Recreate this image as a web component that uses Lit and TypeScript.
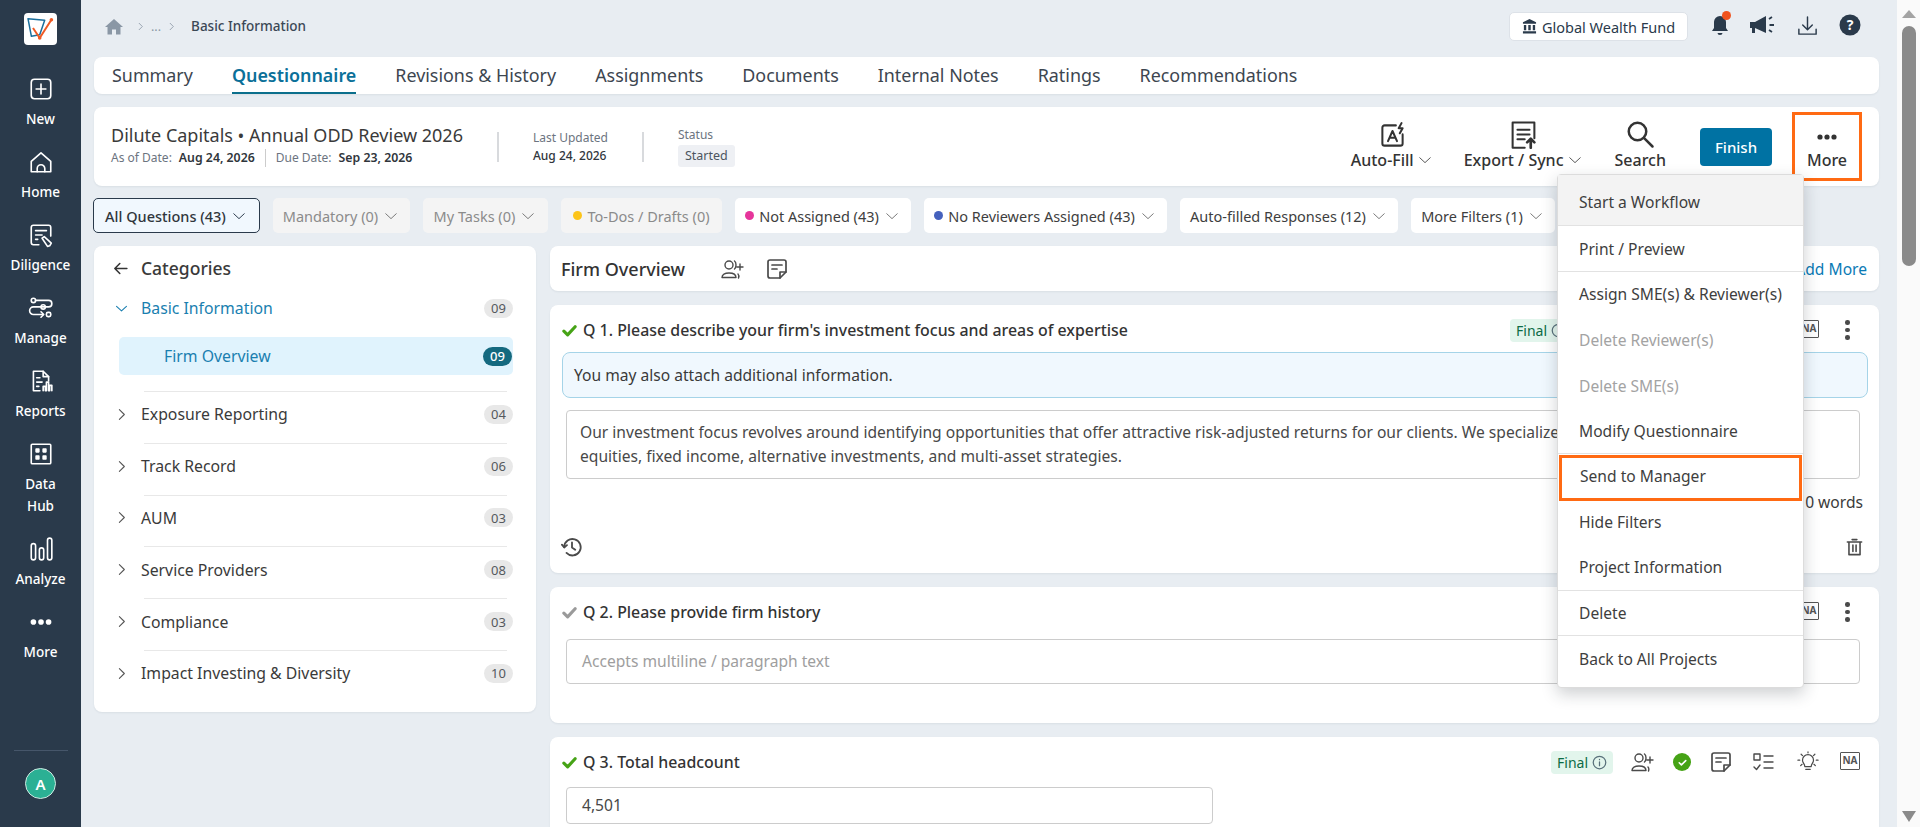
import { LitElement, css, html, svg } from 'lit';
import { customElement } from 'lit/decorators.js';

const icon = (body: unknown, size = 24, box = 24, color = 'currentColor', sw = 1.7) => html`
  <svg width=${size} height=${size} viewBox="0 0 ${box} ${box}" fill="none" stroke=${color} stroke-width=${sw}
    stroke-linecap="round" stroke-linejoin="round">${body}</svg>`;

const chevDown = svg`<path d="M5 9l7 6.500L19 9"/>`;
const chevRight = svg`<path d="M9 5l7 7-7 7"/>`;

const navIcons: Record<string, unknown> = {
  New: svg`<rect x="3" y="3" width="18" height="18" rx="3"/><path d="M12 7.500v9M7.500 12h9"/>`,
  Home: svg`<path d="M3 21V11.500L12 3.500l9 8V21z"/><path d="M8.500 21v-3a3.500 3.500 0 0 1 7 0v3"/>`,
  Diligence: svg`<path d="M10 21H5a2 2 0 0 1-2-2V5a2 2 0 0 1 2-2h14a2 2 0 0 1 2 2v8"/><path d="M7 8h10M7 12h6M7 16h2"/><path d="M13 15l2-1.500 6.500 6-1.500 2.500-2 .5z"/>`,
  Manage: svg`<rect x="3" y="3" width="4" height="4" rx="2"/><path d="M7 5h12a2 2 0 0 1 0 6H5a2 2 0 0 0 0 7h9"/><rect x="12" y="9" width="4" height="4" rx="2"/><rect x="17" y="16" width="4" height="4" rx="1.500"/><path d="M12 15.500l2.500 2.500-2.500 2.500"/>`,
  Reports: svg`<path d="M11 21H5V3h9l5 5v4"/><path d="M14 3v5h5M8 9h3M8 13h5M8 17h2"/><path d="M14 21v-4h2v4M17 21v-8h2v8M20 21v-5h2v5"/>`,
  'Data Hub': svg`<rect x="3" y="3" width="18" height="18" rx="1"/><rect x="7.500" y="7.500" width="2.500" height="2.500" fill="currentColor"/><rect x="14" y="7.500" width="2.500" height="2.500" fill="currentColor"/><rect x="7.500" y="14" width="2.500" height="2.500" fill="currentColor"/><rect x="14" y="14" width="2.500" height="2.500" fill="currentColor"/>`,
  Analyze: svg`<rect x="3" y="7" width="4" height="15" rx="2"/><rect x="10.500" y="11" width="4" height="11" rx="2"/><rect x="18" y="2" width="4" height="20" rx="2"/>`,
  More: svg`<g fill="currentColor" stroke="none"><circle cx="5" cy="12" r="2.600"/><circle cx="12" cy="12" r="2.600"/><circle cx="19" cy="12" r="2.600"/></g>`,
};

const nav = ['New', 'Home', 'Diligence', 'Manage', 'Reports', 'Data Hub', 'Analyze', 'More'];
const tabs = ['Summary', 'Questionnaire', 'Revisions & History', 'Assignments', 'Documents', 'Internal Notes', 'Ratings', 'Recommendations'];

const filters = [
  { label: 'All Questions (43)', kind: 'active', w: 167 },
  { label: 'Mandatory (0)', kind: 'off', w: 137 },
  { label: 'My Tasks (0)', kind: 'off', w: 125 },
  { label: 'To-Dos / Drafts (0)', kind: 'off', dot: '#fcc419', w: 161, noChev: true },
  { label: 'Not Assigned (43)', kind: '', dot: '#e6359b', w: 176 },
  { label: 'No Reviewers Assigned (43)', kind: '', dot: '#4561bd', w: 243 },
  { label: 'Auto-filled Responses (12)', kind: '', w: 218 },
  { label: 'More Filters (1)', kind: '', w: 144 },
];

const categories = [
  ['Exposure Reporting', '04'],
  ['Track Record', '06'],
  ['AUM', '03'],
  ['Service Providers', '08'],
  ['Compliance', '03'],
  ['Impact Investing & Diversity', '10'],
];

const menu = [
  { t: 'Start a Workflow', c: 'hover line' },
  { t: 'Print / Preview', c: 'line first' },
  { t: 'Assign SME(s) & Reviewer(s)', c: '' },
  { t: 'Delete Reviewer(s)', c: 'dim' },
  { t: 'Delete SME(s)', c: 'dim' },
  { t: 'Modify Questionnaire', c: 'line' },
  { t: 'Send to Manager', c: 'mark' },
  { t: 'Hide Filters', c: '' },
  { t: 'Project Information', c: 'line' },
  { t: 'Delete', c: 'line' },
  { t: 'Back to All Projects', c: '' },
];

const assignIcon = svg`<circle cx="9" cy="8" r="4"/><path d="M2 20.500c0-3 3-4.500 7-4.500s7 1.500 7 4.500z"/><path d="M14.500 4c2 1.500 2 6.500 0 8M20 7v6M17 10h6M18 17c1 1 1 2.500.5 4"/>`;
const noteIcon = svg`<path d="M5 3h14a2 2 0 0 1 2 2v10l-6 6H5a2 2 0 0 1-2-2V5a2 2 0 0 1 2-2z"/><path d="M7 8h10M7 12h5M15 21v-6h6"/>`;
const listIcon = svg`<rect x="3" y="4" width="6" height="6"/><path d="M3 17l2.500 2.500L9 15M13 6h9M13 12h9M13 18h9"/>`;
const bulbIcon = svg`<path d="M8.500 17c0-3-2.500-4-2.500-7a6 6 0 0 1 12 0c0 3-2.500 4-2.500 7z"/><path d="M9.500 20h5M12 1v1M3 10H1M23 10h-2M4.500 3.500l1.500 1.500M19.500 3.500L18 5M4 16l1.500-1.500M20 16l-1.500-1.500"/>`;

@customElement('app-root')
export class AppRoot extends LitElement {
  static styles = css`
    :host {
      display: flex;
      width: 1920px;
      height: 827px;
      overflow: hidden;
      position: relative;
      background: #e8edf2;
      font-family: 'Noto Sans', 'Open Sans', sans-serif;
      color: #3a3a3a;
      font-size: 15.6px;
    }
    svg { display: block; flex: none; }

    .side {
      width: 81px;
      flex: none;
      background: #2a3a4b;
      color: #fff;
      display: flex;
      flex-direction: column;
      align-items: center;
      padding-top: 13px;
      box-sizing: border-box;
    }
    .logo {
      width: 33px;
      height: 32px;
      border-radius: 4px;
      background: #fff;
      margin-bottom: 31px;
    }
    .nav-item {
      width: 81px;
      display: flex;
      flex-direction: column;
      align-items: center;
      text-align: center;
      font-size: 13.5px;
      font-weight: 500;
      line-height: 22px;
      height: 73px;
    }
    .nav-item.two { height: 95px; }
    .nav-item span { margin-top: 6px; width: 60px; }
    .side-foot {
      margin-top: auto;
      width: 54px;
      border-top: 1px solid #46566a;
      padding: 17px 0 28px;
      display: flex;
      justify-content: center;
    }
    .avatar {
      width: 29px;
      height: 29px;
      border-radius: 50%;
      background: #2bb094;
      border: 1px solid #cfe9e2;
      display: flex;
      align-items: center;
      justify-content: center;
      font-weight: 600;
      font-size: 15px;
    }

    .main {
      flex: 1;
      min-width: 0;
      padding: 12px 18px 0 13px;
      display: flex;
      flex-direction: column;
      box-sizing: border-box;
    }
    .scroll {
      width: 23px;
      flex: none;
      background: #fafafa;
      display: flex;
      flex-direction: column;
      align-items: center;
      padding: 10px 0 5px;
      box-sizing: border-box;
    }
    .thumb { width: 14px; height: 240px; margin-top: 8px; border-radius: 7px; background: #8a8a8a; }
    .arrow-up, .arrow-down { width: 0; height: 0; border-left: 7px solid transparent; border-right: 7px solid transparent; }
    .arrow-up { border-bottom: 8px solid #a3a3a3; }
    .arrow-down { border-top: 11px solid #8a8a8a; margin-top: auto; }

    .top {
      height: 29px;
      display: flex;
      align-items: center;
      padding-left: 11px;
      margin-bottom: 16px;
      flex: none;
    }
    .crumbs { display: flex; align-items: center; color: #8a97a5; font-size: 12.500px; }
    .crumbs b { color: #3b4856; font-weight: 500; font-size: 13.500px; margin-left: 14px; padding-bottom: 2px; }
    .crumbs .dots { margin: 0 5px; }
    .fund {
      margin-left: auto;
      height: 29px;
      width: 179px;
      box-sizing: border-box;
      background: #fff;
      border: 1px solid #dde2e8;
      border-radius: 5px;
      display: flex;
      align-items: center;
      justify-content: center;
      gap: 5px;
      color: #2a3a4b;
      font-size: 14.500px;
    }
    .top-icons { display: flex; align-items: center; color: #2a3a4b; margin: -3px 18px 0 20px; gap: 20px; }
    .bell { position: relative; margin-right: -4px; }
    .bell i {
      position: absolute;
      top: -2px;
      right: 1px;
      width: 9px;
      height: 9px;
      border-radius: 50%;
      background: #f0531f;
    }

    .card { background: #fff; border-radius: 8px; box-shadow: 0 1px 2px rgba(40, 60, 80, .08); }
    .tabs {
      height: 37px;
      flex: none;
      display: flex;
      padding-left: 18px;
      gap: 39px;
      font-size: 17.900px;
      box-sizing: border-box;
      margin-bottom: 13px;
    }
    .tab { line-height: 37px; color: #3d4650; height: 37px; box-sizing: border-box; }
    .tab.on { color: #0b7099; font-weight: 600; border-bottom: 2px solid #0b6f8c; }

    .head {
      height: 79px;
      flex: none;
      display: flex;
      align-items: center;
      margin-bottom: 12px;
      padding-left: 17px;
      box-sizing: border-box;
    }
    .head-l { margin-bottom: 4px; }
    .title { font-size: 18px; line-height: 26px; color: #3a3a3a; }
    .sub { font-size: 12px; color: #6c7480; display: flex; align-items: center; line-height: 16px; margin-top: 1px; }
    .sub b { font-weight: 600; font-size: 12.300px; color: #30363c; margin-left: 7px; }
    .sub i { width: 1px; height: 18px; background: #ccc; margin: 0 10px; }
    .vsep { width: 2px; height: 30px; background: #d8dadd; margin: 0 34px; }
    .meta { font-size: 12px; color: #6c7480; line-height: 18px; }
    .meta b { display: block; font-weight: 500; color: #30363c; }
    .pill { background: #eef0f4; color: #4c5560; border-radius: 3px; font-size: 12.500px; line-height: 22px; padding: 0 7px; margin-top: 1px; display: block; }
    .tools { margin-left: auto; display: flex; align-items: flex-end; height: 68px; }
    .tool {
      display: flex;
      flex-direction: column;
      align-items: center;
      font-size: 16px;
      font-weight: 500;
      color: #333;
      height: 68px;
      justify-content: flex-end;
      padding-bottom: 9.500px;
      box-sizing: border-box;
    }
    .tool .lab { display: flex; align-items: center; gap: 2px; line-height: 22px; }
    .finish {
      width: 72px;
      height: 38px;
      background: #0072a3;
      border-radius: 4px;
      color: #fff;
      font-size: 15px;
      font-weight: 500;
      display: flex;
      align-items: center;
      justify-content: center;
      margin: 0 20px 15px 34px;
    }
    .more-btn {
      width: 70px;
      height: 69px;
      box-sizing: border-box;
      border: 3px solid #ff6a13;
      margin-right: 17px;
      padding-bottom: 7px;
    }

    .filters { display: flex; gap: 13px; flex: none; height: 35px; margin-bottom: 13px; margin-left: -1px; }
    .chip {
      background: #fff;
      border-radius: 5px;
      display: flex;
      align-items: center;
      justify-content: center;
      gap: 4px;
      font-size: 14.500px;
      color: #3e3e3e;
      box-sizing: border-box;
    }
    .chip.off { background: #f4f4f4; color: #8b8b8b; }
    .chip.active { background: #f1f8fe; border: 1px solid #2a3a4b; color: #30363c; font-weight: 500; }
    .chip .dot { width: 9px; height: 9px; border-radius: 50%; margin-right: 1px; }

    .body { flex: 1; min-height: 0; display: flex; gap: 14px; align-items: flex-start; }
    .cats { width: 442px; height: 466px; flex: none; padding: 10px 19px 0 18px; box-sizing: border-box; }
    .cats-h { display: flex; align-items: center; gap: 12px; height: 24px; font-size: 17.500px; font-weight: 500; margin-bottom: 16px; }
    .cat { display: flex; align-items: center; font-size: 15.800px; }
    .cat .arrow { width: 24px; margin-right: 8px; display: flex; justify-content: center; margin-left: -3px; }
    .cat .name { flex: 1; }
    .count {
      width: 29px;
      height: 19px;
      border-radius: 10px;
      background: #e8e8e8;
      font-size: 13px;
      color: #55595d;
      display: flex;
      align-items: center;
      justify-content: center;
    }
    .cat.open { color: #1a7fb0; height: 24px; margin: 0 4px 17px 0; }
    .sel {
      height: 38px;
      margin: 0 4px 16px 7px;
      background: #e0f3fd;
      border-radius: 5px;
      color: #1a7fb0;
      display: flex;
      align-items: center;
      justify-content: space-between;
      font-size: 15.800px;
      padding: 0 1px 0 45px;
    }
    .sel .count { background: #14697f; color: #fff; font-weight: 500; }
    .cat.row { height: 51.800px; box-sizing: border-box; padding-bottom: 5px; margin: 0 4px 0 0; position: relative; }
    .cat.row::before {
      content: '';
      position: absolute;
      top: 0;
      left: 32px;
      right: 6px;
      border-top: 1px solid #e8e8e8;
    }

    .qs { flex: 1; min-width: 0; display: flex; flex-direction: column; gap: 14px; }
    .qs-h { height: 45px; display: flex; align-items: center; padding: 0 12px 0 11px; font-size: 18px; font-weight: 500; color: #333; }
    .qs-h .ic { margin-left: 35px; color: #4a4a4a; }
    .qs-h .ic + .ic { margin-left: 21px; }
    .qs-h .add { margin-left: auto; font-size: 15.600px; font-weight: 400; color: #0a7ab5; }

    .q { padding: 0 11px 0 12px; flex: none; box-sizing: border-box; position: relative; }
    .q-h { display: flex; align-items: center; height: 47px; padding-top: 3px; box-sizing: border-box; font-weight: 500; font-size: 15.900px; color: #333; gap: 6px; }
    .q-tools { margin-left: auto; margin-right: 8px; display: flex; align-items: center; color: #4a4a4a; font-weight: 400; }
    .q-tools.menu-row { margin-right: 18px; }
    .q-tools .t1 { margin-left: 17px; }
    .q-tools .t2 { margin-left: 19px; }
    .q-tools .t3 { margin-left: 18px; }
    .q-tools .t4 { margin-left: 22px; }
    .q-tools .t5 { margin-left: 21px; }
    .final {
      background: #e2f5ec;
      border-radius: 4px;
      height: 23px;
      width: 62px;
      display: flex;
      align-items: center;
      justify-content: center;
      gap: 4px;
      font-size: 14px;
      color: #0c6b45;
    }
    .ok { width: 18px; height: 18px; border-radius: 50%; background: #46a316; display: flex; align-items: center; justify-content: center; }
    .na {
      width: 20px;
      height: 18px;
      box-sizing: border-box;
      border: 1.500px solid #555;
      border-radius: 1px;
      font-size: 10px;
      font-weight: 700;
      line-height: 15px;
      text-align: center;
      color: #555;
      margin-top: -3px;
    }
    .kebab { display: flex; flex-direction: column; gap: 3px; margin-left: 26px; width: 5px; }
    .kebab i { width: 4.500px; height: 4.500px; border-radius: 50%; background: #4a4a4a; }
    .hint {
      height: 46px;
      box-sizing: border-box;
      background: #f0f8fe;
      border: 1px solid #a5d4e8;
      border-radius: 8px;
      display: flex;
      align-items: center;
      padding-left: 11px;
      margin-bottom: 12px;
    }
    .field {
      border: 1px solid #ccc;
      border-radius: 4px;
      margin: 0 8px 0 4px;
      box-sizing: border-box;
      padding: 9px 13px 10px;
      line-height: 24px;
      color: #484848;
    }
    .field.ph { color: #9e9e9e; height: 45px; padding: 9px 15px; margin-top: 5px; }
    .field.num { width: 647px; height: 37px; padding: 5px 15px; margin-top: 3px; }
    .words { text-align: right; margin: 11px 5px 0 0; line-height: 24px; }
    .q-foot { display: flex; justify-content: space-between; align-items: center; margin: 22px 4px 0 -1px; color: #4a4a4a; }

    .menu {
      position: absolute;
      left: 1557px;
      top: 174px;
      width: 247px;
      height: 514px;
      box-sizing: border-box;
      background: #fff;
      border: 1px solid #dcdcdc;
      border-radius: 4px;
      box-shadow: 0 6px 16px rgba(30, 40, 50, .22);
    }
    .mi {
      height: 45.600px;
      box-sizing: border-box;
      display: flex;
      align-items: center;
      padding-left: 21px;
      color: #3e3e3e;
    }
    .mi.hover { background: #f3f3f3; height: 51px; padding-top: 3px; }
    .mi.first { padding-top: 2px; }
    .mi.line { border-bottom: 1px solid #e2e2e2; }
    .mi.dim { color: #a3a3a3; }
    .mi.mark { border: 3px solid #ff6a13; margin: 1px 1px -1px; padding: 0 0 3px 18px; }
  `;

  private renderQTools(final: boolean, kebab: boolean) {
    return html`<div class="q-tools ${kebab ? 'menu-row' : ''}">
      ${final ? html`<span class="final">Final ${icon(svg`<circle cx="12" cy="12" r="10"/><path d="M12 11v6M12 7v.5"/>`, 15, 24, '#58707a', 2)}</span>` : ''}
      <span class="t1">${icon(assignIcon, 24, 24, 'currentColor', 1.400)}</span>
      <span class="ok t2">${icon(svg`<path d="M6 12.500l4 4 8-8"/>`, 13, 24, '#fff', 3)}</span>
      <span class="t3">${icon(noteIcon, 24)}</span>
      <span class="t3">${icon(listIcon, 24, 24, 'currentColor', 1.400)}</span>
      <span class="t4">${icon(bulbIcon, 22, 24, 'currentColor', 1.300)}</span>
      <span class="na t5">NA</span>
      ${kebab ? html`<span class="kebab"><i></i><i></i><i></i></span>` : ''}
    </div>`;
  }

  private check(color: string) {
    return icon(svg`<path d="M3 13l6 6L21 6"/>`, 15, 24, color, 5);
  }

  render() {
    return html`
      <aside class="side">
        <div class="logo">
          <svg width="33" height="32" viewBox="0 0 33 32" fill="none" stroke-width="1.500" stroke-linejoin="round">
            <path d="M4 5.700l16.700 1.600-5 14.400-8.300 1.600z" stroke="#1b6f9c"/>
            <path d="M9 15l6.700 10L27.400 6.700" stroke="#ef5a24" stroke-width="2"/>
            <circle cx="15.700" cy="25" r="1.800" fill="#ef5a24" stroke="none"/>
            <circle cx="27.400" cy="6.700" r="1.800" fill="#ef5a24" stroke="none"/>
          </svg>
        </div>
        ${nav.map(
          (n) => html`<div class="nav-item ${n === 'Data Hub' ? 'two' : ''}">
            ${icon(navIcons[n], 26, 24, 'currentColor', 1.500)}<span>${n}</span>
          </div>`
        )}
        <div class="side-foot"><div class="avatar">A</div></div>
      </aside>

      <div class="main">
        <div class="top">
          <div class="crumbs">
            <svg width="18" height="17" viewBox="0 0 18 17" fill="#8a97a5"><path d="M9 1L0 9h2.500v7.500h4.500v-5h4v5h4.500V9H18z"/></svg>
            <span style="margin-left:12px">${icon(chevRight, 11, 24, '#8a97a5', 1.800)}</span>
            <span class="dots">...</span>
            ${icon(chevRight, 11, 24, '#8a97a5', 1.800)}
            <b>Basic Information</b>
          </div>
          <div class="fund">
            <svg width="15" height="15" viewBox="0 0 16 16" fill="#2a3a4b"><path d="M8 0L1 3.500V5h14V3.500zM2 6.500h2.500V12H2zM6.700 6.500h2.600V12H6.700zM11.500 6.500H14V12h-2.500zM1 13h14v2.500H1z"/></svg>
            Global Wealth Fund
          </div>
          <div class="top-icons">
            <span class="bell">
              <svg width="24" height="24" viewBox="0 0 24 24" fill="#2a3a4b"><path d="M12 3a6 6 0 0 0-6 6v6l-2 3h16l-2-3V9a6 6 0 0 0-6-6zM9.500 20a2.500 2 0 0 0 5 0z"/></svg><i></i>
            </span>
            <svg width="28" height="24" viewBox="0 0 28 24" fill="#2a3a4b"><path d="M2 9h5L18 3v17L7 15v5H4v-5H2z"/><path d="M21 6l3-2M21.500 12H26M21 17l3 2" stroke="#2a3a4b" stroke-width="1.800" fill="none"/></svg>
            ${icon(svg`<path d="M12 3v13M7 11.500l5 5 5-5M3 16v5h18v-5"/>`, 23, 24, 'currentColor', 1.500)}
            <svg width="22" height="22" viewBox="0 0 22 22"><circle cx="11" cy="11" r="10.500" fill="#2a3a4b"/><text x="11" y="16" text-anchor="middle" font-size="14" font-weight="700" fill="#fff" font-family="Noto Sans">?</text></svg>
          </div>
        </div>

        <nav class="card tabs">
          ${tabs.map((t) => html`<div class="tab ${t === 'Questionnaire' ? 'on' : ''}">${t}</div>`)}
        </nav>

        <section class="card head">
          <div class="head-l">
            <div class="title">Dilute Capitals • Annual ODD Review 2026</div>
            <div class="sub">As of Date: <b>Aug 24, 2026</b><i></i>Due Date: <b>Sep 23, 2026</b></div>
          </div>
          <div class="vsep"></div>
          <div class="meta">Last Updated<b>Aug 24, 2026</b></div>
          <div class="vsep"></div>
          <div class="meta">Status<span class="pill">Started</span></div>
          <div class="tools">
            <div class="tool" style="margin-right:30px">
              ${icon(svg`<path d="M15 3H5a2 2 0 0 0-2 2v14a2 2 0 0 0 2 2h14a2 2 0 0 0 2-2v-8"/><path d="M8 17l4-9 4 9M9.500 14h5"/><path d="M20 1l-2.500 4.500H21L18.500 10"/>`, 27, 24, '#333', 1.800)}
              <div class="lab">Auto-Fill ${icon(chevDown, 18, 24, '#555', 1.300)}</div>
            </div>
            <div class="tool" style="margin-right:31px">
              ${icon(svg`<path d="M13 23H3V2h18v13"/><path d="M7 8h10M7 12h10M7 16h6"/><path d="M18 23v-7M15 18.500l3-3 3 3" stroke-width="2.200"/>`, 29, 24, '#333', 1.700)}
              <div class="lab">Export / Sync ${icon(chevDown, 18, 24, '#555', 1.300)}</div>
            </div>
            <div class="tool">
              ${icon(svg`<circle cx="10" cy="10" r="7"/><path d="M15.500 15.500L22 22"/>`, 30, 24, '#333', 2)}
              <div class="lab">Search</div>
            </div>
            <div class="finish">Finish</div>
            <div class="tool more-btn">
              ${icon(navIcons.More, 24, 24, '#333')}
              <div class="lab">More</div>
            </div>
          </div>
        </section>

        <div class="filters">
          ${filters.map(
            (f) => html`<div class="chip ${f.kind}" style="width:${f.w}px">
              ${f.dot ? html`<span class="dot" style="background:${f.dot}"></span>` : ''}
              ${f.label}
              ${f.noChev ? '' : icon(chevDown, 18, 24, f.kind === 'active' ? '#2a3a4b' : '#777', 1.300)}
            </div>`
          )}
        </div>

        <div class="body">
          <div class="card cats">
            <div class="cats-h">
              ${icon(svg`<path d="M21 12H4M11 5l-7 7 7 7"/>`, 17, 24, '#333', 2.200)} Categories
            </div>
            <div class="cat open">
              <span class="arrow">${icon(chevDown, 17, 24, '#1a7fb0', 1.500)}</span>
              <span class="name">Basic Information</span>
              <span class="count">09</span>
            </div>
            <div class="sel">Firm Overview <span class="count">09</span></div>
            ${categories.map(
              ([n, c]) => html`<div class="cat row">
                <span class="arrow">${icon(chevRight, 17, 24, '#555', 1.500)}</span>
                <span class="name">${n}</span>
                <span class="count">${c}</span>
              </div>`
            )}
          </div>

          <div class="qs">
            <div class="card qs-h">
              Firm Overview
              <span class="ic">${icon(assignIcon, 24, 24, 'currentColor', 1.400)}</span>
              <span class="ic">${icon(noteIcon, 24)}</span>
              <span class="add">Add More</span>
            </div>

            <div class="card q" style="height:268px">
              <div class="q-h">
                ${this.check('#46a316')} Q 1. Please describe your firm's investment focus and areas of expertise
                ${this.renderQTools(true, true)}
              </div>
              <div class="hint">You may also attach additional information.</div>
              <div class="field">
                Our investment focus revolves around identifying opportunities that offer attractive risk-adjusted returns for our clients. We specialize in<br />
                equities, fixed income, alternative investments, and multi-asset strategies.
              </div>
              <div class="words">0 words</div>
              <div class="q-foot">
                ${icon(svg`<path d="M3.500 12a9 9 0 1 1 2.500 6.500"/><path d="M1 9.500l2.500 3 3-2.500M12 7v5.500l3.500 2.500"/>`, 22, 24, '#4a4a4a', 2)}
                ${icon(svg`<path d="M3 5h18M5 5h14v16H5zM9 2h6M10 9v8M14 9v8"/>`, 19, 24, '#4a4a4a', 2)}
              </div>
            </div>

            <div class="card q" style="height:136px">
              <div class="q-h">
                ${this.check('#9a9a9a')} Q 2. Please provide firm history
                ${this.renderQTools(false, true)}
              </div>
              <div class="field ph">Accepts multiline / paragraph text</div>
            </div>

            <div class="card q" style="height:120px">
              <div class="q-h">
                ${this.check('#46a316')} Q 3. Total headcount
                ${this.renderQTools(true, false)}
              </div>
              <div class="field num">4,501</div>
            </div>
          </div>
        </div>
      </div>

      <div class="scroll">
        <div class="arrow-up"></div>
        <div class="thumb"></div>
        <div class="arrow-down"></div>
      </div>

      <div class="menu">
        ${menu.map((m) => html`<div class="mi ${m.c}">${m.t}</div>`)}
      </div>
    `;
  }
}
